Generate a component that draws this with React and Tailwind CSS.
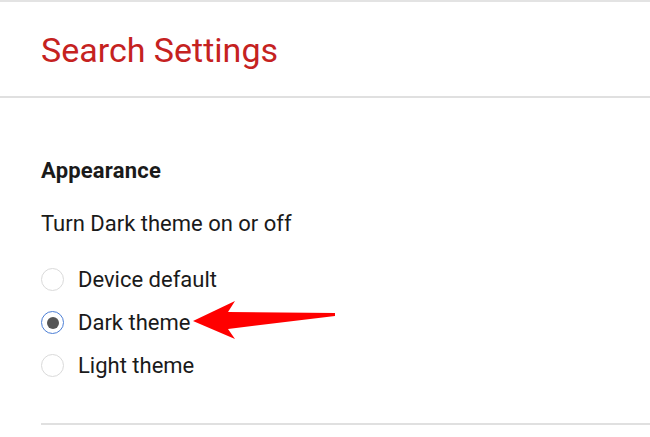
import React from "react";

function Radio({ checked }) {
  return (
    <div
      className={
        "w-[23px] h-[23px] rounded-full flex items-center justify-center shrink-0 " +
        (checked ? "border-[1.5px] border-[#4d7fd6]" : "border-[1.5px] border-[#dadada]")
      }
    >
      {checked && <div className="w-[12px] h-[12px] rounded-full bg-[#555555]" />}
    </div>
  );
}

export default function App() {
  const options = [
    { label: "Device default", checked: false },
    { label: "Dark theme", checked: true },
    { label: "Light theme", checked: false },
  ];
  return (
    <div
      className="relative w-[650px] h-[437px] bg-white overflow-hidden text-[#202124]"
      style={{ fontFamily: "Roboto, 'Liberation Sans', sans-serif" }}
    >
      <div className="border-t-2 border-[#e3e3e3] h-[98px] border-b-2 border-b-[#e0e0e0] pl-[41px] pt-[26px]">
        <h1 className="text-[34px] leading-[44px] text-[#c5221f] font-normal">Search Settings</h1>
      </div>
      <div className="pl-[41px]">
        <div className="pt-[60px] text-[22px] leading-[26px] font-bold text-[#1a1a1a] tracking-[0.2px]">Appearance</div>
        <div className="mt-[27px] text-[22px] leading-[26px] text-[#1a1a1a]">Turn Dark theme on or off</div>
        <div className="mt-[31px] flex flex-col gap-[20px]">
          {options.map((o) => (
            <div key={o.label} className="flex items-center h-[23px]">
              <Radio checked={o.checked} />
              <span className="ml-[14px] text-[22px] leading-[26px] text-[#1a1a1a]">{o.label}</span>
            </div>
          ))}
        </div>
        <div className="mt-[46px] border-t-2 border-[#e0e0e0]" />
      </div>
      <svg className="absolute left-0 top-0" width="650" height="437" viewBox="0 0 650 437">
        <polygon
          points="193,321 235,301 228,312 335,313 335,316 228,329 235,339"
          fill="#ff0000"
        />
      </svg>
    </div>
  );
}
